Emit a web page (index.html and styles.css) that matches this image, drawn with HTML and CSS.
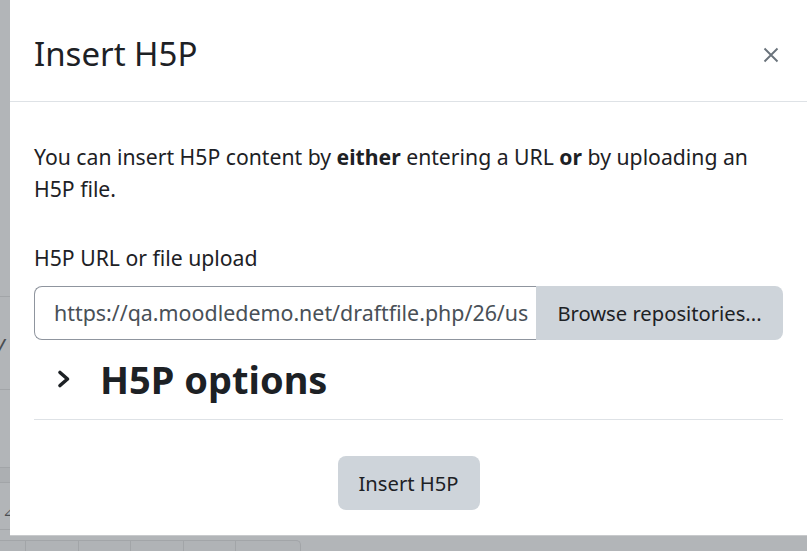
FILE: index.html
```html
<!DOCTYPE html>
<html lang="en">
<head>
<meta charset="utf-8">
<title>Insert H5P</title>
<link rel="stylesheet" href="styles.css">
</head>
<body>
<div class="page">
  <div class="side">
    <div class="row r1"></div>
    <div class="row r2"><span class="glyph g1">y</span></div>
    <div class="row r3"></div>
    <div class="row r4"></div>
    <div class="row r5"><span class="glyph g2">⊿</span></div>
  </div>
  <div class="table">
    <div class="cell c1"></div>
    <div class="cell c2"></div>
    <div class="cell c3"></div>
    <div class="cell c4"></div>
    <div class="cell c5"></div>
    <div class="cell c6"></div>
  </div>
</div>

<div class="modal">
  <div class="modal-header">
    <h5 class="modal-title">Insert H5P</h5>
    <button class="close" aria-label="Close">
      <svg width="16" height="16" viewBox="0 0 16 16"><path d="M1.5 1.5 L14.5 14.5 M14.5 1.5 L1.5 14.5" stroke="#6a737b" stroke-width="1.9" fill="none"/></svg>
    </button>
  </div>
  <div class="modal-body">
    <p class="intro"><span>You can insert H5P content by </span><strong>either</strong><span> entering a URL </span><strong>or</strong><span> by uploading an</span> <span>H5P file.</span></p>
    <label class="label">H5P URL or file upload</label>
    <div class="input-group">
      <div class="input">https://qa.moodledemo.net/draftfile.php/26/us</div>
      <button class="btn btn-browse">Browse repositories...</button>
    </div>
    <div class="options">
      <svg class="chev" width="16" height="20" viewBox="0 0 16 20"><polyline points="4,3.5 11.5,10 4,16.5" fill="none" stroke="#1d2125" stroke-width="3.6" stroke-linecap="round" stroke-linejoin="round"/></svg>
      <span class="options-title">H5P options</span>
    </div>
  </div>
  <div class="modal-footer">
    <button class="btn btn-insert">Insert H5P</button>
  </div>
</div>
</body>
</html>
```
FILE: styles.css
```css
html, body {
  margin: 0;
  padding: 0;
}
body {
  width: 807px;
  height: 551px;
  overflow: hidden;
  background: #b2b5b8;
  font-family: "Noto Sans", "Segoe UI", sans-serif;
  color: #1d2125;
  position: relative;
}
.page {
  width: 807px;
  height: 551px;
}
.side {
  width: 10px;
  display: flex;
  flex-direction: column;
}
.row {
  border-bottom: 1px solid #a2a5a8;
  position: relative;
  overflow: hidden;
}
.r1 { height: 296px; }
.r2 { height: 92px; }
.r3 { height: 77px; }
.r4 { height: 14px; background: #acafb2; }
.r5 { height: 46px; }
.glyph {
  position: absolute;
  left: -6px;
  font-size: 22px;
  color: #4a4e52;
  font-family: "Noto Sans", sans-serif;
}
.g1 { top: 30px; font-style: italic; left: -5px; }
.g2 { top: 18px; font-size: 14px; left: 3px; }
.table {
  margin-top: 10px;
  display: flex;
  width: 300px;
  height: 20px;
  border-top: 1px solid #a2a5a8;
  border-right: 1px solid #a2a5a8;
  border-top-right-radius: 5px;
  background: #b0b3b6;
}
.cell {
  border-right: 1px solid #a2a5a8;
  height: 20px;
}
.cell:last-child { border-right: none; }
.c1 { width: 25px; }
.c2 { width: 52px; }
.c3 { width: 51px; }
.c4 { width: 52px; }
.c5 { width: 51px; }
.c6 { flex: 1; }

.modal {
  position: absolute;
  left: 10px;
  top: 0;
  width: 800px;
  height: 535px;
  background: #fff;
  box-shadow: 0 1px 0 #c8cacc;
  display: flex;
  flex-direction: column;
}
.modal-header {
  display: flex;
  align-items: center;
  justify-content: space-between;
  height: 101px;
  border-bottom: 1px solid #dee2e6;
  padding: 0 31px 0 24px;
  box-sizing: content-box;
}
.modal-title {
  margin: 0;
  font-size: 33px;
  font-weight: 400;
  line-height: 40px;
  padding-top: 6px;
  color: #1d2125;
}
.close {
  background: none;
  border: 0;
  padding: 0;
  width: 16px;
  height: 16px;
  margin-top: 8px;
  display: flex;
}
.modal-body {
  padding: 39px 24px 0 24px;
  width: 749px;
}
.intro {
  margin: 0;
  font-size: 21.2px;
  line-height: 32px;
  color: #1d2125;
}
.intro strong { font-weight: 700; }
.label {
  display: block;
  margin-top: 37px;
  font-size: 21.2px;
  line-height: 32px;
}
.input-group {
  margin-top: 12px;
  display: flex;
  height: 54px;
}
.input {
  flex: 1;
  box-sizing: border-box;
  border: 1px solid #8f959e;
  border-right: 0;
  border-radius: 8px 0 0 8px;
  padding: 0 0 0 19px;
  font-size: 21.4px;
  line-height: 52px;
  color: #495057;
  white-space: nowrap;
  overflow: hidden;
}
.btn {
  font-family: "Noto Sans", "Segoe UI", sans-serif;
  background: #ced4da;
  border: 0;
  color: #1d2125;
  font-size: 20.2px;
}
.btn-browse {
  width: 247px;
  border-radius: 0 8px 8px 0;
  padding: 0;
  text-align: center;
}
.options {
  display: flex;
  align-items: center;
  height: 79px;
  border-bottom: 1px solid #dee2e6;
  padding-left: 22px;
}
.chev {
  margin-right: 28px;
  margin-top: -2px;
}
.options-title {
  font-size: 38px;
  font-weight: 700;
  line-height: 44px;
  margin-top: -1px;
}
.modal-footer {
  display: flex;
  justify-content: center;
  padding-top: 36px;
  width: 797px;
}
.btn-insert {
  width: 142px;
  height: 54px;
  border-radius: 8px;
  padding: 0;
}
```
